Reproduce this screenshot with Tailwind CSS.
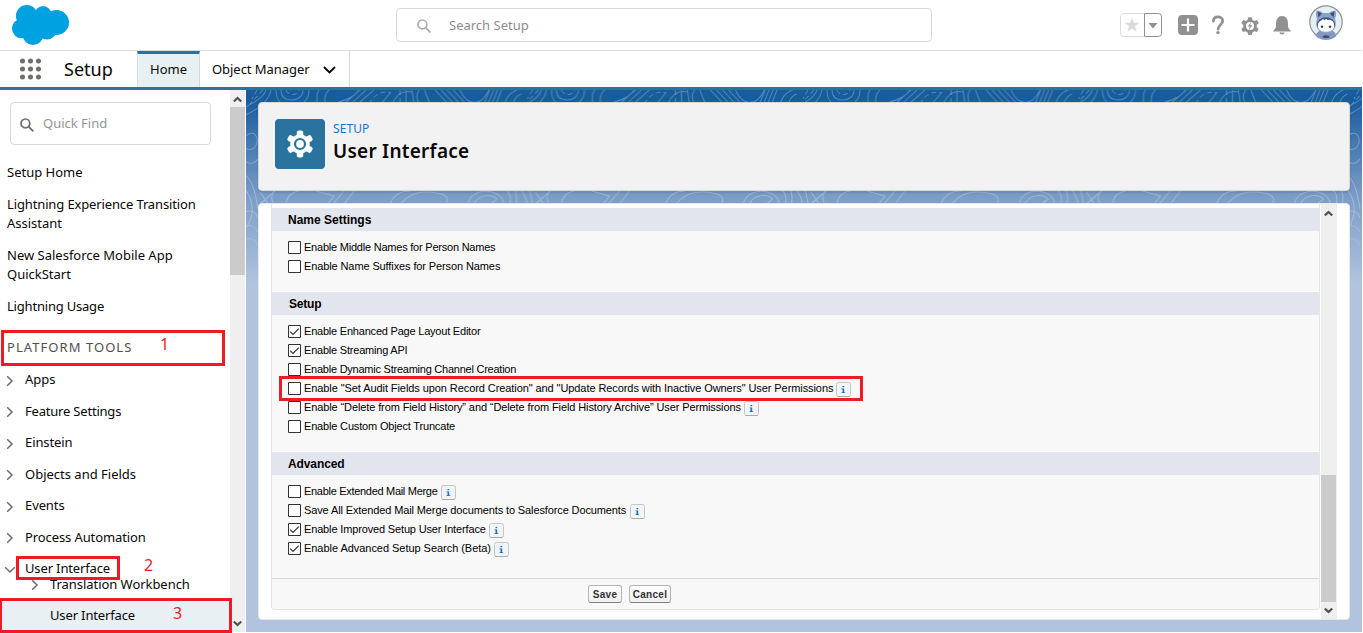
<!DOCTYPE html>
<html lang="en">
<head>
<meta charset="utf-8">
<title>User Interface | Setup</title>
<script src="https://cdn.jsdelivr.net/npm/@tailwindcss/browser@4"></script>
</head>
<body class="w-[1363px] h-[633px] overflow-hidden bg-white font-['Noto_Sans',sans-serif] text-[13px] text-[#080707]">
<svg class="hidden">
  <symbol id="chev" viewBox="0 0 8 12"><path d="M1.2 1.2 6 6 1.2 10.8" fill="none" stroke="#706e6b" stroke-width="1.5"/></symbol>
  <symbol id="search" viewBox="0 0 14 14"><circle cx="5.4" cy="5.4" r="4.4" fill="none" stroke="currentColor" stroke-width="1.7"/><path d="m8.6 8.6 4.2 4.2" stroke="currentColor" stroke-width="1.9" stroke-linecap="round"/></symbol>
  <symbol id="up" viewBox="0 0 9 7"><path d="M.8 5.6 4.5 1.9 8.2 5.6" fill="none" stroke="#505050" stroke-width="2.1"/></symbol>
  <symbol id="down" viewBox="0 0 9 7"><path d="M.8 1.4 4.5 5.1 8.2 1.4" fill="none" stroke="#505050" stroke-width="2.1"/></symbol>
  <symbol id="off" viewBox="0 0 13 13"><path d="M.5.5h12v12H.5z" fill="#fff" stroke="#333"/></symbol>
  <symbol id="on" viewBox="0 0 13 13"><path d="M.5.5h12v12H.5z" fill="#fff" stroke="#333"/><path d="M2.2 6.6 5 9.4l5.8-5.8" fill="none" stroke="#333" stroke-width="1.2"/></symbol>
  <symbol id="info" viewBox="0 0 15 15"><rect x=".5" y=".5" width="14" height="14" rx="2" fill="#f3f4f6" stroke="#c3c5c8"/><path d="M1.5 14.5h12" stroke="#aaa"/><path d="M6.5 4h1.700v1.300h-1.700zM5.500 6.500h2.700v3.700h1v.8H5.500v-.8h1V7.300h-1z" fill="#1570cd"/></symbol>
</svg>

<header class="flex h-[51px] w-[1362px] border-b border-[#d8dde0] relative">
  <svg class="mt-[5px] ml-[12px] w-[57px] h-[40px]" viewBox="0 0 57 40" fill="#00a1e0"><circle cx="14.800" cy="10.900" r="10.900"/><circle cx="31" cy="9.800" r="8.700"/><circle cx="44.500" cy="17.500" r="12.500"/><circle cx="9.800" cy="23.500" r="9.800"/><circle cx="21" cy="29.700" r="10.300"/><circle cx="35" cy="25" r="9.500"/><path d="M9 12h38v14H9z"/></svg>
  <div class="ml-[327px] mt-[8px] flex h-[34px] w-[536px] items-center rounded-[4px] border border-[#d8d8d8] pl-[20px]">
    <svg class="mt-[2px] w-[14px] h-[14px] text-[#b0adab]"><use href="#search"/></svg>
    <span class="ml-[18px] mt-[2px] text-[#8e8c8a]">Search Setup</span>
  </div>
  <svg class="ml-[188px] mt-[5px] h-[36px] w-[225px]" viewBox="1120 5 225 36">
    <path d="M1144 13.500h-20a3.500 3.500 0 0 0-3.500 3.500v16a3.500 3.500 0 0 0 3.500 3.500h20" fill="none" stroke="#dcdcdc"/>
    <path d="m1132 17.500 1.900 5.200h5.300l-4.200 3.400 1.500 5.600-4.500-3.200-4.500 3.200 1.500-5.600-4.200-3.400h5.300z" fill="#dddbda"/>
    <path d="M1144.500 13.500h14a3 3 0 0 1 3 3v17a3 3 0 0 1-3 3h-14z" fill="#fff" stroke="#919191"/>
    <path d="M1148.500 23h9l-4.500 5.500z" fill="#919191"/>
    <rect x="1178" y="15" width="20" height="20" rx="4" fill="#919191"/><path d="M1188 18.500v13M1181.500 25h13" stroke="#fff" stroke-width="2.200"/>
    <path d="M1213.400 21.200c0-2.800 2-4.300 4.600-4.300s4.700 1.600 4.700 4.200c0 3.700-4.600 3.500-4.600 8" fill="none" stroke="#919191" stroke-width="2.700" stroke-linecap="round"/><circle cx="1218" cy="32.600" r="1.700" fill="#919191"/>
    <path d="M1248.300 17.200h3.400l.7 2.600 1.900 1.100 2.600-.8 1.800 3-2 1.900v2.200l2 1.900-1.800 3-2.600-.8-1.900 1.100-.7 2.600h-3.400l-.7-2.600-1.900-1.100-2.600.8-1.800-3 2-1.900V25l-2-1.900 1.800-3 2.600.8 1.900-1.100z" fill="#919191"/>
    <circle cx="1250" cy="26" r="4" fill="#fff"/><path d="m1251.200 22-3.400 4.500h2l-1 3.500 3.500-4.700h-2.100z" fill="#919191"/>
    <path d="M1273.500 31.500v-1.200c2-1.300 2.500-2.500 2.500-6.300 0-4.500 2-8 6-8s6 3.500 6 8c0 3.800.5 5 2.500 6.300v1.200zM1279.500 32.500h5a2.500 2 0 0 1-5 0z" fill="#919191"/>
    <circle cx="1326" cy="22" r="16.200" fill="#e4f0f4" stroke="#8d9391" stroke-width="1.200"/>
    <path d="M1315.500 36c1-3 2.500-4.500 4-5h13c1.500.5 3 2 4 5a16 16 0 0 1-21 0z" fill="#8498bd"/>
    <path d="M1316.500 10.500c3 0 5 1 6.500 2.500h6c1.500-1.500 3.500-2.500 6.500-2.500.8 3 .8 6-.5 8.500 3 8-2 14-9 14s-12-6-9-14c-1.300-2.500-1.300-5.500-.5-8.500z" fill="#8da2c8"/>
    <path d="m1317.500 11.500 4.500 2-3.500 4zM1334.500 11.500l-4.500 2 3.500 4z" fill="#39507d"/>
    <ellipse cx="1326" cy="24.500" rx="9" ry="7.200" fill="#3a5486"/>
    <path d="M1317.800 26c0-3 1.500-5 3.500-5.500l1.500-1.500 1.500 1 2-1 1.500 1 2-.2c3 .5 4.400 3 4.400 6 0 4-4 6-8.200 6s-8.200-2-8.200-5.800z" fill="#fff"/>
    <circle cx="1322" cy="26.700" r="1.200" fill="#2d3d60"/><circle cx="1330" cy="26.700" r="1.200" fill="#2d3d60"/>
    <path d="M1322.500 37.500c0-3 7-3 7 0a16 16 0 0 1-7 0z" fill="#304a79"/>
  </svg>
</header>

<nav class="flex h-[39px] w-[1362px] border-b-[3px] border-[#2a739e]">
  <svg class="mt-[7px] ml-[20px] h-[22px] w-[22px]" viewBox="0 0 22 22" fill="#706e6b"><circle cx="2.500" cy="3" r="2.500"/><circle cx="10.500" cy="3" r="2.500"/><circle cx="18.500" cy="3" r="2.500"/><circle cx="2.500" cy="11" r="2.500"/><circle cx="10.500" cy="11" r="2.500"/><circle cx="18.500" cy="11" r="2.500"/><circle cx="2.500" cy="19" r="2.500"/><circle cx="10.500" cy="19" r="2.500"/><circle cx="18.500" cy="19" r="2.500"/></svg>
  <div class="ml-[22px] w-[73px] text-[18px] leading-[37px]">Setup</div>
  <div class="w-[63px] border-t-[3px] border-t-[#2a739e] border-r border-r-[#d8d8d8] border-l border-l-[#d8dde0] bg-[#e8f0f4] pl-[12px] leading-[31px]">Home</div>
  <div class="flex w-[150px] items-center border-r border-[#d8d8d8] pl-[12px]"><span class="mt-[2px] w-[98px] tracking-[-0.05px] whitespace-nowrap">Object Manager</span>
    <svg class="mt-[2px] ml-[13px] h-[8px] w-[13px]" viewBox="0 0 13 8"><path d="m1 1 5.500 5.500L12 1" fill="none" stroke="#080707" stroke-width="1.900"/></svg></div>
</nav>

<div class="flex h-[542px] w-[1362px]">
  <aside class="relative flex h-[542px] w-[230px] flex-col overflow-hidden">
    <div class="mt-[12px] ml-[10px] flex h-[43px] w-[201px] shrink-0 items-center rounded-[4px] border border-[#d8d8d8] pl-[9px]">
      <svg class="mt-[3px] h-[14px] w-[14px] text-[#706e6b]"><use href="#search"/></svg><span class="ml-[9px] text-[#979593]">Quick Find</span>
    </div>
    <div class="mt-[18px] flex flex-col gap-[13px] pl-[7px] leading-[19px]">
      <p>Setup Home</p>
      <p><span class="tracking-[-0.13px]">Lightning Experience Transition</span><br>Assistant</p>
      <p>New Salesforce Mobile App<br>QuickStart</p>
      <p class="tracking-[-0.2px]">Lightning Usage</p>
    </div>
    <h2 class="mt-[22px] pl-[7px] leading-[19px] tracking-[1.05px] text-[#514f4d]">PLATFORM TOOLS</h2>
    <ul class="mt-[7px] leading-[31.500px]">
      <li class="flex items-center pl-[6px]"><svg class="mt-[2px] mr-[11px] h-[12px] w-[8px]"><use href="#chev"/></svg>Apps</li>
      <li class="flex items-center pl-[6px] tracking-[-0.2px]"><svg class="mt-[2px] mr-[11px] h-[12px] w-[8px]"><use href="#chev"/></svg>Feature Settings</li>
      <li class="flex items-center pl-[6px] tracking-[-0.1px]"><svg class="mt-[2px] mr-[11px] h-[12px] w-[8px]"><use href="#chev"/></svg>Einstein</li>
      <li class="flex items-center pl-[6px]"><svg class="mt-[2px] mr-[11px] h-[12px] w-[8px]"><use href="#chev"/></svg>Objects and Fields</li>
      <li class="flex items-center pl-[6px] tracking-[-0.1px]"><svg class="mt-[2px] mr-[11px] h-[12px] w-[8px]"><use href="#chev"/></svg>Events</li>
      <li class="flex items-center pl-[6px] tracking-[-0.1px]"><svg class="mt-[2px] mr-[11px] h-[12px] w-[8px]"><use href="#chev"/></svg>Process Automation</li>
      <li class="flex h-[24px] items-center pt-[7px] pl-[4px] leading-[17px] tracking-[-0.14px]"><svg class="mt-[3px] mr-[9px] h-[8px] w-[12px]" viewBox="0 0 12 8"><path d="M1.200 1.200 6 6l4.800-4.800" fill="none" stroke="#706e6b" stroke-width="1.500"/></svg>User Interface</li>
      <li class="flex h-[15px] items-center pl-[31px] leading-[15px] tracking-[-0.05px]"><svg class="mt-[1px] mr-[11px] h-[12px] w-[8px]"><use href="#chev"/></svg>Translation Workbench</li>
    </ul>
    <div class="absolute top-[509px] left-0 h-[33px] w-[230px] bg-[#e8f0f4] pl-[50px] leading-[33px] tracking-[-0.14px]">User Interface</div>
  </aside>
  <div class="flex h-[542px] w-[15px] shrink-0 flex-col items-center bg-[#efefef]">
    <svg class="mt-[6px] h-[7px] w-[9px]"><use href="#up"/></svg>
    <div class="mt-[4px] h-[168px] w-full bg-[#cbcbcb]"></div>
    <svg class="mt-auto mb-[5px] h-[7px] w-[9px]"><use href="#down"/></svg>
  </div>

  <main class="relative ml-[1px] flex h-[542px] w-[1116px] flex-col bg-[#b0c4df] bg-linear-to-b/srgb from-[#195c9d] from-[10px] via-[#7c9dc8] via-[108px] to-[#b0c4df] to-[195px] px-[12px] pt-[12px]">
    <svg class="absolute inset-0 h-[200px] w-[1116px]" viewBox="0 0 1116 200">
      <defs>
        <linearGradient id="fade" x2="0" y2="1"><stop offset=".6" stop-color="#fff"/><stop offset="1" stop-color="#fff" stop-opacity="0"/></linearGradient>
        <mask id="fm"><path d="M0 0h1116v200H0z" fill="url(#fade)"/></mask>
        <pattern id="topo" width="275.500" height="200" patternUnits="userSpaceOnUse">
          <g fill="none" stroke="#fff" stroke-opacity=".27" stroke-width="1">
            <path d="M-6 20C5 14 17 9 20 0M-6 27C8 22 22 14 25 0M30 0c0 13 7 16 16 16s17-5 17-16M35 0c0 8 5 10 11 10s11-4 11-10M71 13V4l3-6M79 13c-1-6 0-10 5-14M90 13c13-4 20-7 24-15M99 13l16-14M106 13l15-14M113 13l16-14M135 14l10-12M146 14c5-11 12-14 20-12M160 0v14M166 0l2 14M173 0c-3 5-3 10 1 15M184 14l-6-15M189 0l13 14M195 0l14 15M201 0l14 15M207 0l14 15M214 0c7 16 21 17 29 0M238 14l6-15M242 14l6-15M246 14l6-15M250 14l6-15M259 14c1-7 6-12 14-15M267 14c1-5 3-8 8-10"/>
            <path d="M40 0c1 5 10 7 13 0M11 0l-5 9M17 0 4 14M123 14c4-8 12-14 21-11M154 0v14" stroke-dasharray="5 3"/>
            <path d="M-2 48c5-7 12-6 13 1 1 8-6 14-13 8M-3 63c0 10 9 14 15 6M-2 84c9 6 12 22 14 35M-4 96c10 10 15 27 4 42M-3 123c6-4 13-2 15 5M-3 137c8-4 12 0 15 5M-3 150c8-4 12 0 15 5"/>
            <path d="M14 102l8 12M28 101c-3 5-3 8 0 14M40 114c1-8 5-12 13-13M70 101l18 5-8 10M98 101l-12 14M108 101l-10 13M144 114c3-8 10-13 20-13M155 114c8-11 20-14 36-11 13 2 11 8 8 12M222 114c3-17 33-17 36 0M228 114c4-9 17-11 23-5l-6 5M14 114l15-13M264 114c1-8 0-11-4-14M270 114c1-5 1-9-1-14"/>
          </g>
        </pattern>
      </defs>
      <path d="M0 0h1116v200H0z" fill="url(#topo)" mask="url(#fm)"/>
    </svg>
    <section class="relative flex h-[89px] w-[1092px] shrink-0 rounded-[4px] border border-[#d8d8d8] bg-[#f2f2f2] pt-[16px] pl-[16px] shadow-[0_2px_2px_rgba(0,0,0,0.1)]">
      <div class="flex h-[50px] w-[50px] items-center justify-center rounded-[4px] bg-[#2a739e]">
        <svg class="h-[28px] w-[28px]" viewBox="-14 -14 28 28"><g fill="#fff"><circle r="9.800"/><g id="tooth"><rect x="-3.200" y="-13.600" width="6.400" height="27.200" rx="2"/></g><use href="#tooth" transform="rotate(60)"/><use href="#tooth" transform="rotate(120)"/></g><circle r="5" fill="none" stroke="#2a739e" stroke-width="2.200"/></svg>
      </div>
      <div class="ml-[8px]">
        <p class="text-[12px] leading-[19px] tracking-[0.1px] text-[#1b73cf]">SETUP</p>
        <h1 class="text-[19px] leading-[26px] font-semibold tracking-[0.25px]">User Interface</h1>
      </div>
    </section>
    <section class="relative mt-[12px] flex h-[417px] w-[1092px] shrink-0 rounded-[4px] border border-[#e8e8e8] bg-white pl-[12px]">
      <div class="mr-[1px] flex h-[406px] w-[1049px] flex-col rounded-b-[4px] border-x border-b border-[#e5e5e5] bg-[#f8f8f8] font-['Liberation_Sans',Arial,sans-serif] text-[11px] text-black">
        <div class="h-[4px] bg-white"></div>
        <h3 class="h-[23px] bg-[#e2e5ee] pl-[16px] text-[12px] leading-[25px] font-bold">Name Settings</h3>
        <div class="flex h-[61px] flex-col border-b border-white pt-[7px] pl-[16px]">
          <label class="flex h-[19px] items-center tracking-[-0.22px]"><svg class="mr-[3px] h-[13px] w-[13px]"><use href="#off"/></svg>Enable Middle Names for Person Names</label>
          <label class="flex h-[19px] items-center tracking-[-0.11px]"><svg class="mr-[3px] h-[13px] w-[13px]"><use href="#off"/></svg>Enable Name Suffixes for Person Names</label>
        </div>
        <h3 class="h-[23px] bg-[#e2e5ee] pl-[17px] text-[12px] leading-[25px] font-bold tracking-[-0.2px]">Setup</h3>
        <div class="flex h-[137px] flex-col border-b border-white pt-[7px] pl-[16px]">
          <label class="flex h-[19px] items-center tracking-[-0.21px]"><svg class="mr-[3px] h-[13px] w-[13px]"><use href="#on"/></svg>Enable Enhanced Page Layout Editor</label>
          <label class="flex h-[19px] items-center tracking-[-0.21px]"><svg class="mr-[3px] h-[13px] w-[13px]"><use href="#on"/></svg>Enable Streaming API</label>
          <label class="flex h-[19px] items-center tracking-[-0.24px]"><svg class="mr-[3px] h-[13px] w-[13px]"><use href="#off"/></svg>Enable Dynamic Streaming Channel Creation</label>
          <label class="flex h-[19px] items-center tracking-[-0.08px]"><svg class="mr-[3px] h-[13px] w-[13px]"><use href="#off"/></svg>Enable "Set Audit Fields upon Record Creation" and "Update Records with Inactive Owners" User Permissions<svg class="mt-[2px] ml-[3px] h-[15px] w-[15px]"><use href="#info"/></svg></label>
          <label class="flex h-[19px] items-center tracking-[-0.11px]"><svg class="mr-[3px] h-[13px] w-[13px]"><use href="#off"/></svg>Enable “Delete from Field History” and “Delete from Field History Archive” User Permissions<svg class="mt-[2px] ml-[3px] h-[15px] w-[15px]"><use href="#info"/></svg></label>
          <label class="flex h-[19px] items-center tracking-[-0.17px]"><svg class="mr-[3px] h-[13px] w-[13px]"><use href="#off"/></svg>Enable Custom Object Truncate</label>
        </div>
        <h3 class="h-[23px] bg-[#e2e5ee] pl-[16px] text-[12px] leading-[25px] font-bold tracking-[-0.1px]">Advanced</h3>
        <div class="flex h-[103px] flex-col pt-[7px] pl-[16px]">
          <label class="flex h-[19px] items-center tracking-[-0.3px]"><svg class="mr-[3px] h-[13px] w-[13px]"><use href="#off"/></svg>Enable Extended Mail Merge<svg class="mt-[2px] ml-[4px] h-[15px] w-[15px]"><use href="#info"/></svg></label>
          <label class="flex h-[19px] items-center tracking-[-0.12px]"><svg class="mr-[3px] h-[13px] w-[13px]"><use href="#off"/></svg>Save All Extended Mail Merge documents to Salesforce Documents<svg class="mt-[2px] ml-[4px] h-[15px] w-[15px]"><use href="#info"/></svg></label>
          <label class="flex h-[19px] items-center tracking-[-0.15px]"><svg class="mr-[3px] h-[13px] w-[13px]"><use href="#on"/></svg>Enable Improved Setup User Interface<svg class="mt-[2px] ml-[3px] h-[15px] w-[15px]"><use href="#info"/></svg></label>
          <label class="flex h-[19px] items-center tracking-[-0.04px]"><svg class="mr-[3px] h-[13px] w-[13px]"><use href="#on"/></svg>Enable Advanced Setup Search (Beta)<svg class="mt-[2px] ml-[3px] h-[15px] w-[15px]"><use href="#info"/></svg></label>
        </div>
        <div class="flex flex-1 gap-[7px] border-t border-[#d8d8d8] pt-[6px] pl-[316px] text-[10px] font-bold tracking-[0.3px] text-[#333]">
          <button class="h-[18px] w-[34px] rounded-[3px] border border-[#b5b5b5] border-b-[#7f7f7f] bg-linear-to-b from-white to-[#f0f0f0] leading-[17px]">Save</button>
          <button class="h-[18px] w-[42px] rounded-[3px] border border-[#b5b5b5] border-b-[#7f7f7f] bg-linear-to-b from-white to-[#f0f0f0] leading-[17px]">Cancel</button>
        </div>
      </div>
      <div class="flex h-[415px] w-[16px] flex-col items-center bg-[#efefef] pr-[1px]">
        <svg class="mt-[6px] h-[7px] w-[9px]"><use href="#up"/></svg>
        <div class="mt-[258px] h-[127px] w-[15px] bg-[#cbcbcb]"></div>
        <svg class="mt-[5px] h-[7px] w-[9px]"><use href="#down"/></svg>
      </div>
    </section>
  </main>
</div>

<!-- Step callouts laid over the page -->
<div class="absolute top-[330px] left-[1px] h-[36px] w-[224px] border-[3px] border-[#ed1c24]"></div>
<div class="absolute top-[556px] left-[16px] h-[24px] w-[104px] border-[3px] border-[#ed1c24]"></div>
<div class="absolute top-[598px] left-[0px] h-[35px] w-[232px] border-[3px] border-l-[2px] border-[#ed1c24]"></div>
<div class="absolute top-[376px] left-[279px] h-[25px] w-[584px] border-[3px] border-[#ed1c24]"></div>
<span class="absolute top-[333px] left-[160px] text-[16px] leading-[22px] text-[#ed1c24]">1</span>
<span class="absolute top-[554px] left-[144px] text-[16px] leading-[22px] text-[#ed1c24]">2</span>
<span class="absolute top-[602px] left-[173px] text-[16px] leading-[22px] text-[#ed1c24]">3</span>
</body>
</html>
